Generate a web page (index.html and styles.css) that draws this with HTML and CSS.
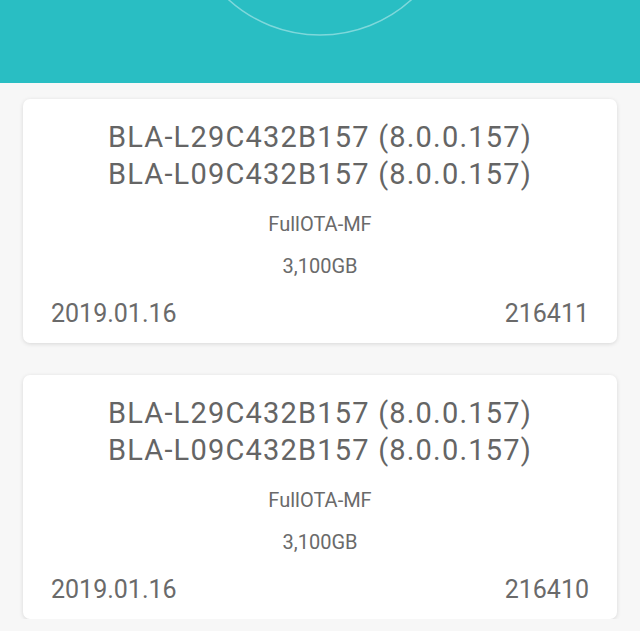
FILE: index.html
```html
<!DOCTYPE html>
<html lang="en">
<head>
	<meta charset="UTF-8">
	<title>固件列表</title>
	<link rel="stylesheet" href="styles.css">
</head>
<body>
	<div class="header">
		<svg class="header-ring" width="640" height="83" viewBox="0 0 640 83">
			<circle cx="320" cy="-101" r="136" fill="none" stroke="rgba(255,255,255,0.4)" stroke-width="1.5"/>
		</svg>
	</div>
	<ul class="list">
		<li class="card">
			<div class="card-title">
				<p>BLA-L29C432B157 (8.0.0.157)</p>
				<p>BLA-L09C432B157 (8.0.0.157)</p>
			</div>
			<p class="card-type">FullOTA-MF</p>
			<p class="card-size">3,100GB</p>
			<div class="card-foot">
				<span>2019.01.16</span>
				<span>216411</span>
			</div>
		</li>
		<li class="card">
			<div class="card-title">
				<p>BLA-L29C432B157 (8.0.0.157)</p>
				<p>BLA-L09C432B157 (8.0.0.157)</p>
			</div>
			<p class="card-type">FullOTA-MF</p>
			<p class="card-size">3,100GB</p>
			<div class="card-foot">
				<span>2019.01.16</span>
				<span>216410</span>
			</div>
		</li>
	</ul>
</body>
</html>
```

FILE: styles.css
```css
*{
	margin: 0;
	padding: 0;
}
ul, ol{
	list-style: none;
}
html, body{
	background: #f7f7f7;
}
body{
	font-family: Roboto, "Noto Sans", "Liberation Sans", sans-serif;
	color: #6a6a6a;
}
.header{
	height: 83px;
	background: #29bec3;
	overflow: hidden;
}
.header-ring{
	display: block;
}
.list{
	padding: 16px 23px 0;
	display: flex;
	flex-direction: column;
	gap: 32px;
}
.card{
	height: 244px;
	box-sizing: border-box;
	padding: 20px 28px 0;
	background: #fff;
	border-radius: 7px;
	box-shadow: 0 1px 4px rgba(0,0,0,0.13);
	text-align: center;
}
.card-title{
	font-size: 29px;
	line-height: 37px;
	letter-spacing: 1.2px;
	color: #656565;
}
.card-type{
	margin-top: 19px;
	font-size: 20px;
	line-height: 24px;
}
.card-size{
	margin-top: 18px;
	font-size: 20px;
	line-height: 24px;
}
.card-foot{
	margin-top: 21px;
	display: flex;
	justify-content: space-between;
	font-size: 25px;
	line-height: 30px;
}
```
